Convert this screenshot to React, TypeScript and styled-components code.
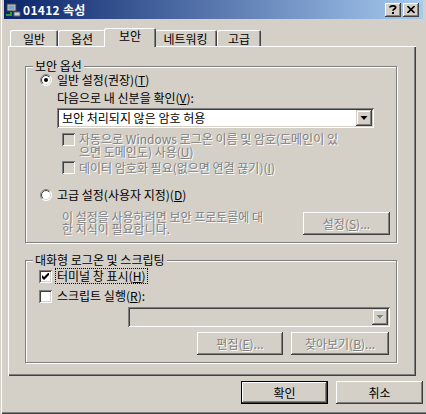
import React from 'react';
import styled, { createGlobalStyle } from 'styled-components';

const FACE = '#d4d0c8';
const SHADOW = '#808080';
const DARK = '#404040';
const HI = '#ffffff';

const Global = createGlobalStyle`
  html, body { margin: 0; padding: 0; background: ${FACE}; }
  body {
    font-family: "Noto Sans CJK KR", "Noto Sans", "Liberation Sans", sans-serif;
    font-size: 12px;
    color: #000;
  }
  * { box-sizing: border-box; }
`;

const Window = styled.div`
  width: 426px;
  height: 414px;
  background: ${FACE};
  display: flex;
  flex-direction: column;
  overflow: hidden;
  box-shadow: inset 1px 0 0 ${FACE}, inset 2px 0 0 ${HI}, inset 0 -1px 0 ${DARK},
    inset 0 -2px 0 ${SHADOW};
`;

const TitleBar = styled.div`
  margin: 0 3px 0 4px;
  height: 19px;
  display: flex;
  align-items: center;
  padding: 0 4px 0 1px;
  background: linear-gradient(to right, #0a246a, #a6caf0);
  color: #fff;
  font-weight: bold;
  font-size: 12px;
`;

const TitleText = styled.span`
  margin-left: 2px;
  flex: 1;
  letter-spacing: 0.3px;
`;

const CaptionButton = styled.div`
  width: 16px;
  height: 14px;
  margin-left: 2px;
  background: ${FACE};
  display: flex;
  align-items: center;
  justify-content: center;
  color: #000;
  box-shadow: inset -1px -1px 0 ${DARK}, inset 1px 1px 0 ${HI}, inset -2px -2px 0 ${SHADOW};
`;

const Body = styled.div`
  display: flex;
  flex-direction: column;
  padding-left: 8px;
`;

const TabStrip = styled.div`
  margin-top: 9px;
  height: 18px;
  padding-left: 2px;
  display: flex;
  align-items: flex-end;
  position: relative;
  z-index: 1;
`;

const Tab = styled.div<{ $w: number; $active?: boolean }>`
  width: ${(p) => (p.$active ? p.$w + 4 : p.$w)}px;
  height: ${(p) => (p.$active ? 19 : 16)}px;
  margin: ${(p) => (p.$active ? '0 -2px -1px -2px' : '0')};
  background: ${FACE};
  border-radius: 2px 2px 0 0;
  display: flex;
  align-items: center;
  justify-content: center;
  padding-bottom: ${(p) => (p.$active ? 4 : 0)}px;
  box-shadow: inset 1px 1px 0 ${HI}, inset -1px 0 0 ${DARK}, inset -2px 0 0 ${SHADOW};
  position: relative;
  z-index: ${(p) => (p.$active ? 2 : 0)};
`;

const Panel = styled.div`
  width: 408px;
  height: 330px;
  padding: 20px 0 0 17px;
  display: flex;
  flex-direction: column;
  box-shadow: inset 1px 1px 0 ${HI}, inset -1px -1px 0 ${DARK}, inset -2px -2px 0 ${SHADOW};
`;

const Group = styled.div<{ $h: number; $mt?: number }>`
  position: relative;
  width: 372px;
  height: ${(p) => p.$h}px;
  margin-top: ${(p) => p.$mt || 0}px;
  border: 1px solid ${SHADOW};
  box-shadow: 1px 1px 0 ${HI}, inset 1px 1px 0 ${HI};
  display: flex;
  flex-direction: column;
`;

const Legend = styled.span`
  position: absolute;
  top: -8px;
  left: 7px;
  padding: 0 2px;
  line-height: 14px;
  background: ${FACE};
`;

const Row = styled.div<{ $mt?: number; $ml?: number; $h?: number; $align?: string }>`
  display: flex;
  align-items: ${(p) => p.$align || 'center'};
  margin-top: ${(p) => p.$mt || 0}px;
  margin-left: ${(p) => p.$ml || 0}px;
  height: ${(p) => (p.$h ? `${p.$h}px` : 'auto')};
`;

const Label = styled.span<{ $disabled?: boolean; $ml?: number; $lh?: number }>`
  margin-left: ${(p) => p.$ml || 0}px;
  line-height: ${(p) => p.$lh || 14}px;
  white-space: nowrap;
  color: ${(p) => (p.$disabled ? SHADOW : '#000')};
  text-shadow: ${(p) => (p.$disabled ? `1px 1px 0 ${HI}` : 'none')};
`;

const Focus = styled.span`
  margin-left: 4px;
  padding: 0 1px;
  line-height: 14px;
  outline: 1px dotted #000;
  outline-offset: 0;
`;

const Box = styled.div<{ $disabled?: boolean; $mt?: number }>`
  width: 13px;
  height: 13px;
  flex: none;
  margin-top: ${(p) => p.$mt || 0}px;
  background: ${(p) => (p.$disabled ? FACE : HI)};
  display: flex;
  align-items: center;
  justify-content: center;
  box-shadow: inset 1px 1px 0 ${SHADOW}, inset -1px -1px 0 ${HI}, inset 2px 2px 0 ${DARK},
    inset -2px -2px 0 ${FACE};
`;

const Combo = styled.div<{ $disabled?: boolean; $ml: number; $w: number; $mt: number }>`
  width: ${(p) => p.$w}px;
  height: 20px;
  margin-left: ${(p) => p.$ml}px;
  margin-top: ${(p) => p.$mt}px;
  background: ${(p) => (p.$disabled ? FACE : HI)};
  display: flex;
  align-items: center;
  padding: 2px;
  box-shadow: inset 1px 1px 0 ${SHADOW}, inset -1px -1px 0 ${HI}, inset 2px 2px 0 ${DARK},
    inset -2px -2px 0 ${FACE};
`;

const ComboText = styled.span`
  flex: 1;
  padding-left: 3px;
  line-height: 16px;
`;

const DropButton = styled.div`
  width: 16px;
  height: 16px;
  background: ${FACE};
  display: flex;
  align-items: center;
  justify-content: center;
  box-shadow: inset -1px -1px 0 ${DARK}, inset 1px 1px 0 ${FACE}, inset -2px -2px 0 ${SHADOW},
    inset 2px 2px 0 ${HI};
`;

const Button = styled.div<{ $w: number; $disabled?: boolean; $default?: boolean; $ml?: number }>`
  width: ${(p) => p.$w}px;
  height: 23px;
  margin-left: ${(p) => p.$ml || 0}px;
  background: ${FACE};
  display: flex;
  align-items: center;
  justify-content: center;
  border: ${(p) => (p.$default ? '1px solid #000' : 'none')};
  color: ${(p) => (p.$disabled ? SHADOW : '#000')};
  text-shadow: ${(p) => (p.$disabled ? `1px 1px 0 ${HI}` : 'none')};
  box-shadow: inset -1px -1px 0 ${DARK}, inset 1px 1px 0 ${HI}, inset -2px -2px 0 ${SHADOW},
    inset 2px 2px 0 ${FACE};
  flex: none;
`;

const DescRow = styled.div`
  display: flex;
  align-items: flex-start;
  margin-top: 8px;
  margin-left: 36px;
  padding-right: 6px;
  height: 24px;
`;

const DescButton = styled(Button)`
  margin-left: auto;
  margin-top: 1px;
`;

const ButtonRow = styled.div<{ $mt: number; $pr: number }>`
  display: flex;
  justify-content: flex-end;
  margin-top: ${(p) => p.$mt}px;
  padding-right: ${(p) => p.$pr}px;
`;

const Radio = ({ checked }: { checked?: boolean }) => (
  <svg width="12" height="12" viewBox="0 0 12 12" style={{ flex: 'none' }}>
    <defs>
      <linearGradient id="ro" x1="0" y1="0" x2="1" y2="1">
        <stop offset="0.5" stopColor={SHADOW} />
        <stop offset="0.5" stopColor={HI} />
      </linearGradient>
      <linearGradient id="ri" x1="0" y1="0" x2="1" y2="1">
        <stop offset="0.5" stopColor={DARK} />
        <stop offset="0.5" stopColor={FACE} />
      </linearGradient>
    </defs>
    <circle cx="6" cy="6" r="5.5" fill={HI} stroke="url(#ro)" strokeWidth="1" />
    <circle cx="6" cy="6" r="4.5" fill="none" stroke="url(#ri)" strokeWidth="1" />
    {checked && <circle cx="6" cy="6" r="2" fill="#000" />}
  </svg>
);

const Check = () => (
  <svg width="7" height="7" viewBox="0 0 7 7">
    <path d="M0 2 L2 4 L6 0 L7 0 L7 2 L2 7 L0 5 Z" fill="#000" />
  </svg>
);

const Arrow = ({ disabled }: { disabled?: boolean }) => (
  <svg width="8" height="5" viewBox="0 0 8 5">
    {disabled && <path d="M1.5 1 L7.5 1 L4.5 4.5 Z" fill={HI} />}
    <path d="M0.5 0 L7.5 0 L4 4 Z" fill={disabled ? SHADOW : '#000'} />
  </svg>
);

const AppIcon = () => (
  <svg width="16" height="16" viewBox="0 0 16 16" style={{ flex: 'none' }}>
    <rect x="2" y="2" width="9" height="7" fill="#c0c0c0" stroke="#404040" strokeWidth="1" />
    <rect x="3.5" y="3.5" width="6" height="4" fill="#7fa0c8" />
    <path d="M1 13 L6 13 L6 10" stroke="#2e9b2e" strokeWidth="2" fill="none" />
    <rect x="9" y="10" width="6" height="4" fill="#d0d0d0" stroke="#606060" strokeWidth="1" />
  </svg>
);

export default function App() {
  return (
    <>
      <Global />
      <Window>
        <TitleBar>
          <AppIcon />
          <TitleText>01412 속성</TitleText>
          <CaptionButton>
            <svg width="8" height="9" viewBox="0 0 8 9">
              <path
                d="M1 2.5 C1 0.5 7 0.2 6.6 2.6 C6.4 4 4 4 4 5.8"
                stroke="#000"
                strokeWidth="1.8"
                fill="none"
              />
              <rect x="3" y="7" width="2" height="2" fill="#000" />
            </svg>
          </CaptionButton>
          <CaptionButton>
            <svg width="8" height="7" viewBox="0 0 8 7">
              <path d="M0.5 0 L7.5 7 M7.5 0 L0.5 7" stroke="#000" strokeWidth="1.6" />
            </svg>
          </CaptionButton>
        </TitleBar>
        <Body>
          <TabStrip>
            <Tab $w={48}>일반</Tab>
            <Tab $w={48}>옵션</Tab>
            <Tab $w={48} $active>
              보안
            </Tab>
            <Tab $w={63}>네트워킹</Tab>
            <Tab $w={44}>고급</Tab>
          </TabStrip>
          <Panel>
            <Group $h={177}>
              <Legend>보안 옵션</Legend>
              <Row $mt={5} $ml={14} $h={16}>
                <Radio checked />
                <Label $ml={5}>
                  일반 설정(권장)(<u>T</u>)
                </Label>
              </Row>
              <Row $mt={2} $ml={31} $h={16}>
                <Label>
                  다음으로 내 신분을 확인(<u>V</u>):
                </Label>
              </Row>
              <Combo $ml={31} $w={317} $mt={2}>
                <ComboText>보안 처리되지 않은 암호 허용</ComboText>
                <DropButton>
                  <Arrow />
                </DropButton>
              </Combo>
              <Row $mt={5} $ml={36} $h={25} $align="flex-start">
                <Box $disabled />
                <Label $disabled $ml={4} $lh={12.5}>
                  자동으로 Windows 로그온 이름 및 암호(도메인이 있
                  <br />
                  으면 도메인도) 사용(<u>U</u>)
                </Label>
              </Row>
              <Row $mt={3} $ml={36} $h={13}>
                <Box $disabled />
                <Label $disabled $ml={4}>
                  데이터 암호화 필요(없으면 연결 끊기)(<u>I</u>)
                </Label>
              </Row>
              <Row $mt={13} $ml={14} $h={16}>
                <Radio />
                <Label $ml={5}>
                  고급 설정(사용자 지정)(<u>D</u>)
                </Label>
              </Row>
              <DescRow>
                <Label $disabled $lh={12}>
                  이 설정을 사용하려면 보안 프로토콜에 대
                  <br />한 지식이 필요합니다.
                </Label>
                <DescButton $w={87} $disabled>
                  설정(<u>S</u>)...
                </DescButton>
              </DescRow>
            </Group>
            <Group $h={103} $mt={17}>
              <Legend>대화형 로그온 및 스크립팅</Legend>
              <Row $mt={7} $ml={13} $h={16}>
                <Box>
                  <Check />
                </Box>
                <Focus>
                  터미널 창 표시(<u>H</u>)
                </Focus>
              </Row>
              <Row $mt={4} $ml={13} $h={16}>
                <Box />
                <Label $ml={5}>
                  스크립트 실행(<u>R</u>):
                </Label>
              </Row>
              <Combo $disabled $ml={102} $w={262} $mt={3}>
                <ComboText />
                <DropButton>
                  <Arrow disabled />
                </DropButton>
              </Combo>
              <ButtonRow $mt={5} $pr={7}>
                <Button $w={86} $disabled>
                  편집(<u>E</u>)...
                </Button>
                <Button $w={98} $disabled $ml={8}>
                  찾아보기(<u>B</u>)...
                </Button>
              </ButtonRow>
            </Group>
          </Panel>
          <ButtonRow $mt={5} $pr={3}>
            <Button $w={87} $default>
              확인
            </Button>
            <Button $w={87} $ml={8}>
              취소
            </Button>
          </ButtonRow>
        </Body>
      </Window>
    </>
  );
}
